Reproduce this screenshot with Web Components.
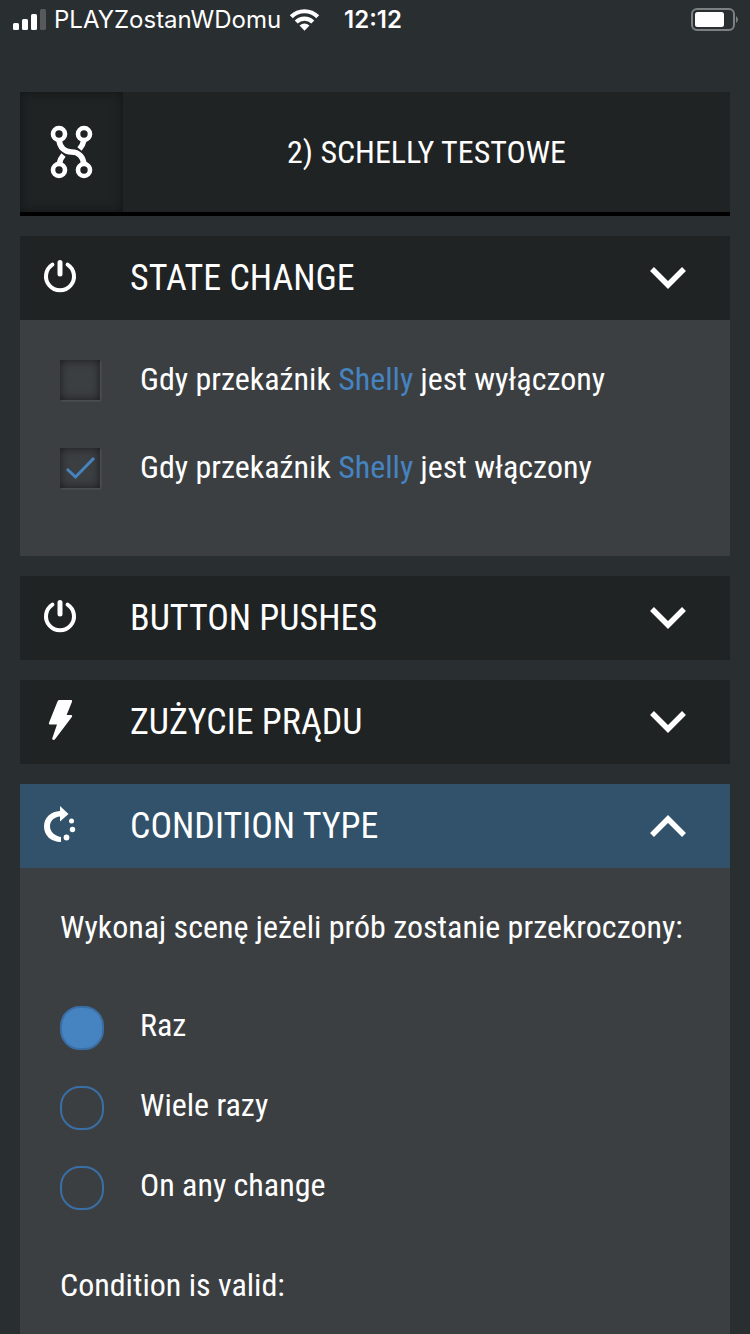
<!DOCTYPE html>
<html lang="pl">
<head>
<meta charset="utf-8">
<meta name="viewport" content="width=device-width">
<title>Schelly testowe</title>
<style>
html, body { margin: 0; }
body {
  background: #292e30;
  color: #fff;
  font-family: "Roboto Condensed", "Liberation Sans Narrow", Roboto, sans-serif;
  font-size: 32px;
  line-height: 38px;
}
.device { color: #4583c1; }
</style>
</head>
<body>
<scene-page>
  <status-bar slot="status" carrier="PLAYZostanWDomu" time="12:12"></status-bar>
  <scene-title>2) SCHELLY TESTOWE</scene-title>
  <fold-section icon="power" heading="STATE CHANGE" filled>
    <check-row>Gdy przekaźnik <span class="device">Shelly</span> jest wyłączony</check-row>
    <check-row checked>Gdy przekaźnik <span class="device">Shelly</span> jest włączony</check-row>
  </fold-section>
  <fold-section icon="power" heading="BUTTON PUSHES"></fold-section>
  <fold-section icon="bolt" heading="ZUŻYCIE PRĄDU"></fold-section>
  <fold-section icon="cycle" heading="CONDITION TYPE" filled active>
    <radio-choices name="repeat" options="Raz|Wiele razy|On any change">Wykonaj scenę jeżeli prób zostanie przekroczony:</radio-choices>
    <panel-note>Condition is valid:</panel-note>
  </fold-section>
</scene-page>

<script>
class BaseElement extends HTMLElement {
  render(html) {
    if (!this.shadowRoot) this.attachShadow({ mode: 'open' });
    this.shadowRoot.innerHTML = '<style>*{box-sizing:border-box}</style>' + html;
  }
}

const ICONS = {
  power: `<svg width="40" height="40" viewBox="0 0 40 40" fill="none" stroke="#fff" stroke-linecap="round"><path d="M12.4 8.6A14 14 0 1 0 27.6 8.6" stroke-width="4"/><path d="M20 6.5V18" stroke-width="5"/></svg>`,
  bolt: `<svg width="40" height="40" viewBox="0 0 40 40" fill="#fff"><path d="M19.5 0H31q1.6 0 1 1.700L26.6 15H31q1.6 0 1 1.800L15 39.2q-.9 1-2 .6t-.8-1.400L17 24.5H10q-1.600 0-1-1.800L17.600 1.300Q18.200 0 19.500 0z"/></svg>`,
  cycle: `<svg width="40" height="40" viewBox="0 0 40 40" fill="#fff"><path d="M20 2L28.500 10L20 17.500V12.500C14 13 10 17 10 22.300S14.500 32 21 33V38C11 38 4 31.500 4 22.500S11 7.500 20 7z"/><circle cx="31.500" cy="17" r="2.500"/><circle cx="32.500" cy="25.500" r="2.700"/><circle cx="26.500" cy="33.500" r="2.900"/></svg>`
};

customElements.define('scene-page', class extends BaseElement {
  connectedCallback() {
    this.render(`<style>
      :host { display: flex; flex-direction: column; min-height: 100vh; }
      main { flex: 1; display: flex; flex-direction: column; gap: 20px; padding: 52px 20px 0; }
      ::slotted(fold-section:last-child) { flex: 1; }
    </style><slot name="status"></slot><main><slot></slot></main>`);
  }
});

customElements.define('status-bar', class extends BaseElement {
  connectedCallback() {
    this.render(`<style>
      :host { display: flex; align-items: center; height: 40px; padding: 0 11px 0 13px; font: 24px/40px Inter, sans-serif; }
      .carrier { margin: 0 8px; }
      .time { margin-left: 24px; font-weight: 600; }
      .battery { margin-left: auto; }
      svg { flex: none; display: block; }
    </style>
    <svg width="33" height="22" viewBox="0 0 33 22" fill="#fff"><rect y="14" width="6" height="7" rx="1.500"/><rect x="9" y="10" width="6" height="11" rx="1.500"/><rect x="18" y="5" width="6" height="16" rx="1.500"/><rect x="27" width="6" height="21" rx="1.500" fill="#57595b"/></svg>
    <span class="carrier">${this.getAttribute('carrier')}</span>
    <svg width="31" height="22" viewBox="0 0 31 22"><path d="M2.300 7.800A18.500 18.500 0 0 1 28.700 7.800M7.200 13A12 12 0 0 1 23.800 13" fill="none" stroke="#fff" stroke-width="4.200"/><path d="M10.500 16.500Q15.500 12.600 20.500 16.500L15.500 21.700z" fill="#fff"/></svg>
    <span class="time">${this.getAttribute('time')}</span>
    <svg class="battery" width="48" height="24" viewBox="0 0 48 24"><rect x="1" y="1" width="42" height="21" rx="5" fill="none" stroke="#7d8081" stroke-width="2"/><rect x="4" y="4" width="29" height="15" rx="2.500" fill="#fff"/><path d="M45 8q4 3.500 0 7z" fill="#7d8081"/></svg>`);
  }
});

customElements.define('scene-title', class extends BaseElement {
  connectedCallback() {
    this.render(`<style>
      :host { display: flex; height: 124px; border-bottom: 4px solid #000; background: #1f2323; box-sizing: border-box; }
      .icon { flex: none; width: 103px; display: grid; place-items: center; box-shadow: inset 0 0 12px rgba(0,0,0,.4); }
      h1 { flex: 1; margin: 0; align-self: center; text-align: center; font: inherit; }
    </style>
    <div class="icon"><svg width="44" height="54" viewBox="0 0 44 54" fill="none" stroke="#fff"><g stroke-width="4.600"><circle cx="9" cy="9" r="6"/><circle cx="34" cy="9" r="6"/><circle cx="9" cy="45" r="6"/><circle cx="34" cy="45" r="6"/></g><path d="M9 15C10 22 14 27 21.500 27S33 32 34 39" stroke-width="5.600"/><path d="M34 15Q33 20 29.500 24M9 39Q10 34 13.500 30" stroke-width="5.600"/></svg></div>
    <h1><slot></slot></h1>`);
  }
});

customElements.define('fold-section', class extends BaseElement {
  connectedCallback() {
    this.render(`<style>
      :host { display: flex; flex-direction: column; }
      h2 { margin: 0; font: inherit; }
      button { display: flex; align-items: center; width: 100%; height: 84px; padding: 0 40px 0 20px; border: 0; background: #1f2323; color: inherit; font: inherit; font-size: 36px; text-align: left; cursor: pointer; }
      .icon { padding-bottom: 4px; }
      .label { flex: 1; margin-left: 50px; }
      svg { display: block; flex: none; }
      .panel { display: none; flex: 1; background: #3c3f42; padding: 40px 40px 20px; }
      :host([filled]) .panel { display: block; }
      :host([active]) button { background: #31526a; }
      :host([active]) .chevron { transform: rotate(180deg); }
    </style>
    <h2><button type="button" aria-expanded="${this.hasAttribute('filled')}"><span class="icon">${ICONS[this.getAttribute('icon')]}</span>
      <span class="label">${this.getAttribute('heading')}</span>
      <svg class="chevron" width="44" height="40" viewBox="0 0 44 40" fill="none" stroke="#fff" stroke-width="5.500"><path d="M6 11L22 27L38 11"/></svg></button></h2>
    <div class="panel"><slot></slot></div>`);
    this.shadowRoot.querySelector('button').onclick = e => {
      const open = this.toggleAttribute('filled');
      this.toggleAttribute('active', open);
      e.currentTarget.setAttribute('aria-expanded', open);
    };
  }
});

customElements.define('check-row', class extends BaseElement {
  connectedCallback() {
    this.render(`<style>
      :host { display: block; margin-bottom: 48px; }
      label { display: flex; gap: 40px; }
      input { appearance: none; width: 40px; height: 40px; margin: 0; box-shadow: inset 0 0 10px rgba(0,0,0,.6), 1px 1px 2px rgba(255,255,255,.12); }
      .box { display: grid; flex: none; }
      .box > * { grid-area: 1 / 1; }
      svg { visibility: hidden; pointer-events: none; }
      input:checked + svg { visibility: visible; }
    </style>
    <label><span class="box"><input type="checkbox" ${this.hasAttribute('checked') ? 'checked' : ''}><svg width="40" height="40" viewBox="0 0 40 40" fill="none" stroke="#4583c1" stroke-width="3"><path d="M7 21L15.500 29L34 10"/></svg></span><span><slot></slot></span></label>`);
  }
});

customElements.define('radio-choices', class extends BaseElement {
  connectedCallback() {
    const name = this.getAttribute('name');
    const rows = this.getAttribute('options').split('|').map((text, i) =>
      `<label><input type="radio" name="${name}" ${i ? '' : 'checked'}><span>${text}</span></label>`).join('');
    this.render(`<style>
      fieldset { margin: 0; padding: 0; border: 0; min-width: 0; }
      :host { display: block; }
      legend { padding: 0; margin-bottom: 60px; }
      label { display: flex; gap: 36px; height: 44px; margin-bottom: 36px; }
      input { appearance: none; flex: none; width: 44px; height: 44px; margin: 0; border: 2px solid #3a6fa5; border-radius: 20px; }
      input:checked { background: #4583c1; }
    </style>
    <fieldset><legend><slot></slot></legend>${rows}</fieldset>`);
  }
});

customElements.define('panel-note', class extends BaseElement {
  connectedCallback() {
    this.render(`<style>:host { display: block; padding-top: 20px; } p { margin: 0; }</style><p><slot></slot></p>`);
  }
});
</script>
</body>
</html>
